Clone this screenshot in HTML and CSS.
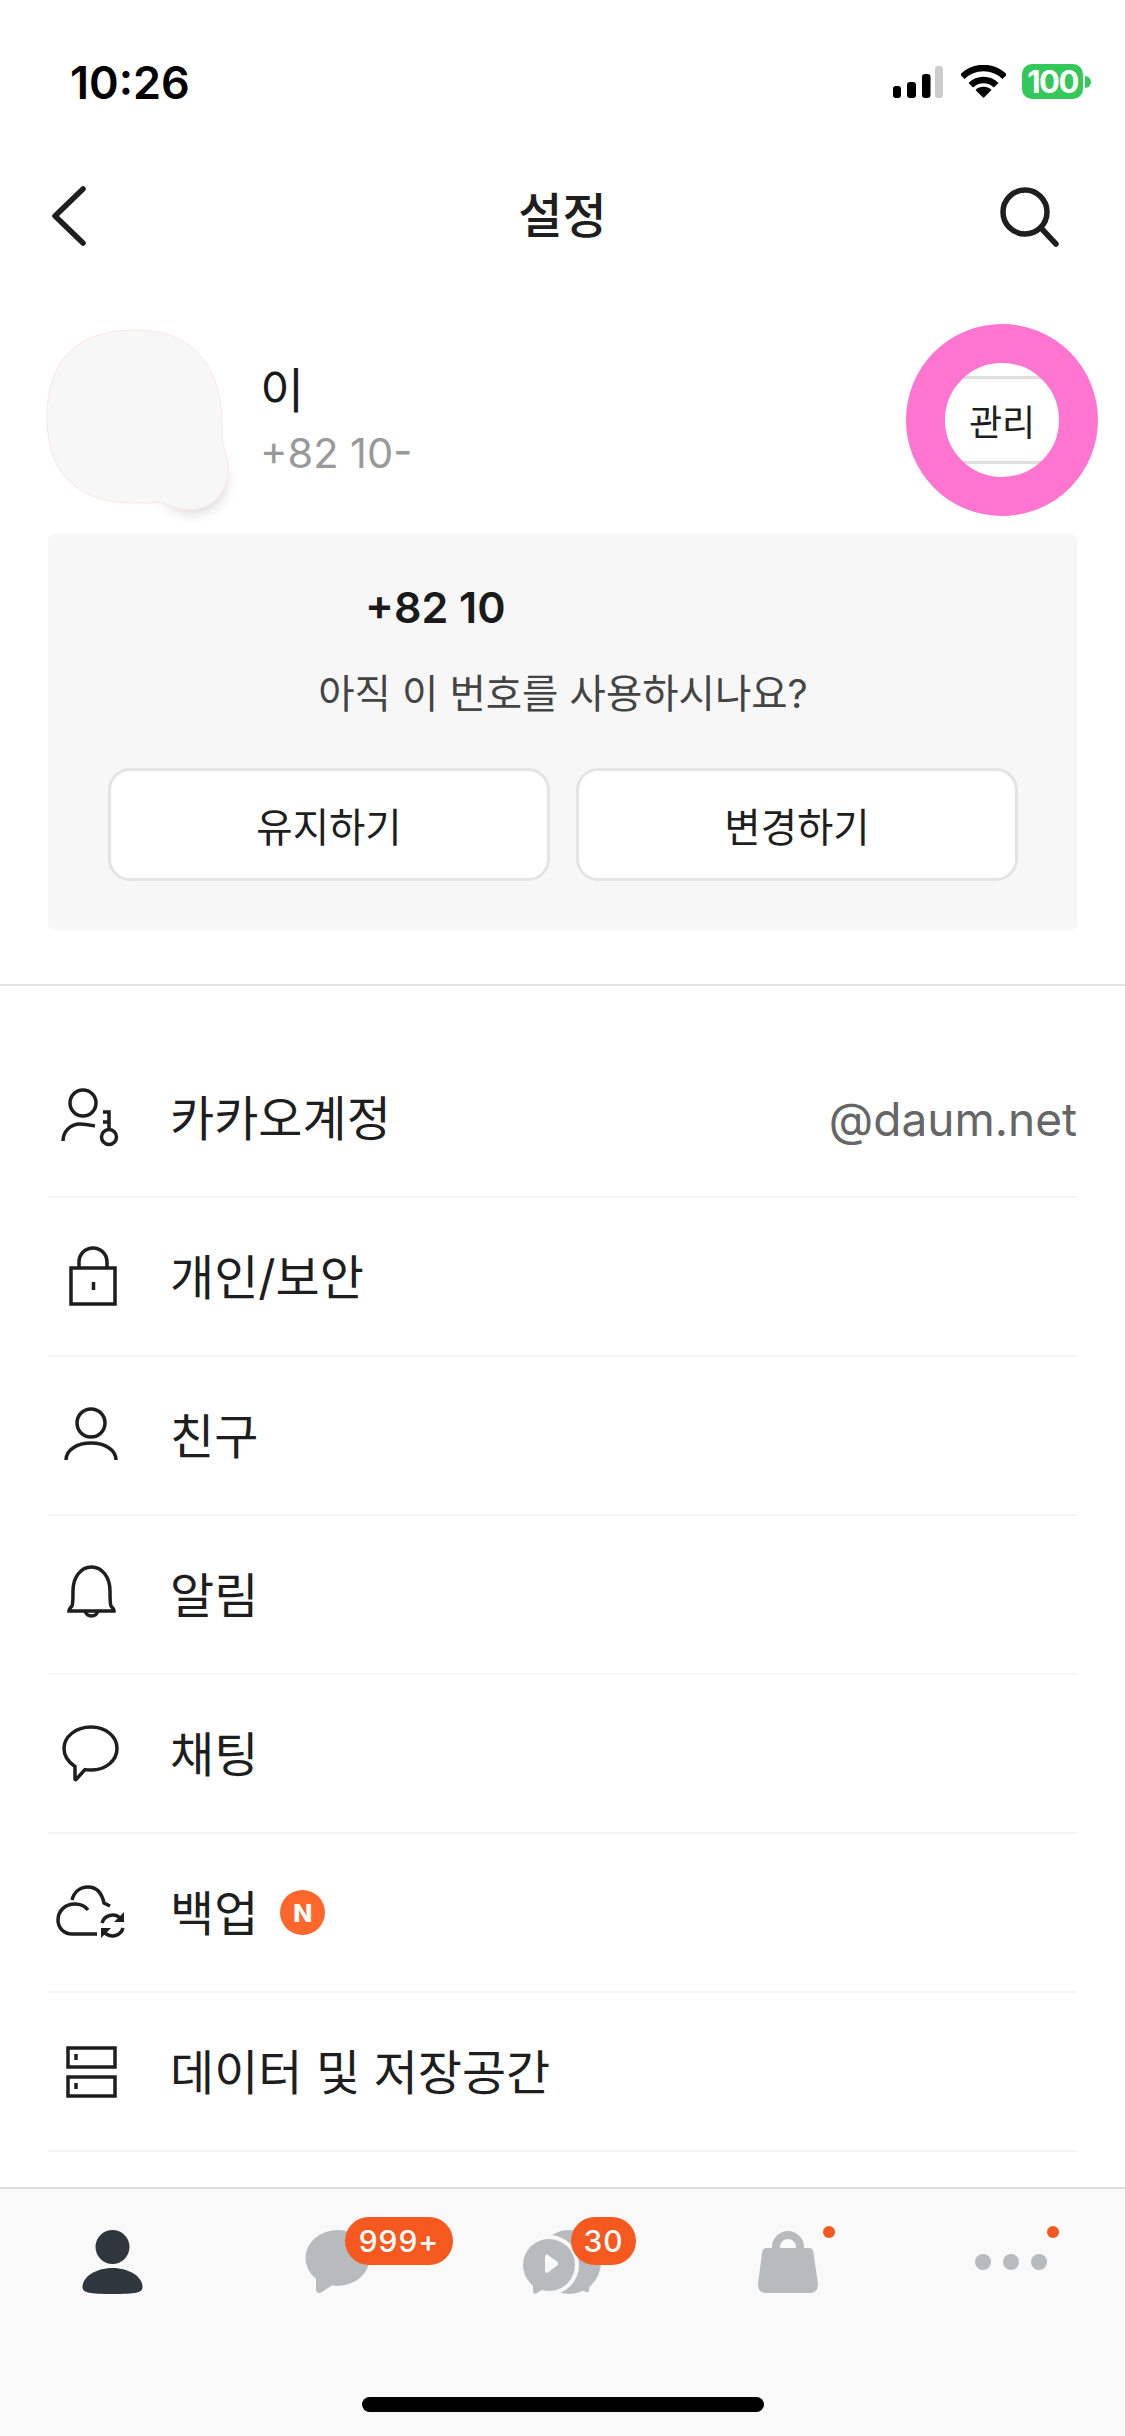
FILE: index.html
```html
<!DOCTYPE html>
<html lang="ko">
<head>
<meta charset="utf-8">
<title>설정</title>
<link rel="stylesheet" href="styles.css">
</head>
<body>
<div class="page">
  <div class="status">
    <span class="time">10:26</span>
    <div class="status-icons">
      <svg class="signal" width="50" height="32" viewBox="0 0 50 32"><rect class="k" x="0" y="20" width="8" height="12" rx="3"/><rect class="k" x="14" y="16" width="9" height="16" rx="3"/><rect class="k" x="29" y="8" width="8.500" height="24" rx="3"/><rect class="off" x="42" y="0" width="8" height="32" rx="3"/></svg>
      <svg class="wifi" width="45" height="33" viewBox="0 0 45 33"><path class="wifi-arc" d="M1.300 11.800A30 30 0 0 1 43.700 11.800"/><path class="wifi-arc" d="M9.800 20.300A18 18 0 0 1 35.200 20.300"/><path class="k" d="M22.500 33L14.500 25A11.500 11.500 0 0 1 30.500 25Z"/></svg>
      <div class="battery"><span class="battery-body">100</span><span class="battery-nub"></span></div>
    </div>
  </div>

  <header class="nav">
    <svg class="nav-back" width="44" height="72" viewBox="0 0 44 72"><path class="line5" d="M35 9L7 36L35 63"/></svg>
    <h1 class="nav-title">설정</h1>
    <svg class="nav-search" width="90" height="72" viewBox="0 0 90 72"><circle class="line5" cx="30" cy="32" r="22"/><path class="line5" d="M46 48L61 64"/></svg>
  </header>

  <section class="profile">
    <svg class="avatar" width="200" height="200" viewBox="0 0 200 200">
      <circle class="avatar-shadow" cx="150" cy="152" r="34"/>
      <path class="avatar-blob" d="M95 8C150 8 182 40 182 105L182 118C184 127 188 135 188 148C188 172 170 188 150 188C138 188 130 184 120 180C112 181 105 181 95 181C35 181 7 150 7 95C7 40 35 8 95 8Z"/>
    </svg>
    <div class="who">
      <div class="who-name">이</div>
      <div class="who-phone">+82 10-</div>
    </div>
    <div class="manage">
      <span>관리</span>
      <div class="ring"></div>
    </div>
  </section>

  <section class="card">
    <div class="card-number">+82 10</div>
    <div class="card-question">아직 이 번호를 사용하시나요?</div>
    <div class="card-actions">
      <div class="card-button">유지하기</div>
      <div class="card-button">변경하기</div>
    </div>
  </section>

  <hr class="rule">

  <main class="list">
    <div class="row">
      <svg class="row-icon" viewBox="0 0 92 72"><circle cx="35" cy="21" r="13"/><path d="M15 59C15 50 22 42 32 42C38 42 42 43 47 44"/><circle cx="61" cy="55" r="7.500"/><path d="M61 47V30H55M61 40H55"/></svg>
      <span class="row-label">카카오계정</span>
      <span class="row-value">@daum.net</span>
    </div>
    <div class="row">
      <svg class="row-icon" viewBox="0 0 92 72"><rect x="23" y="27" width="44" height="36"/><path d="M31 27V21A14 14 0 0 1 59 21V27M45.500 41V49"/></svg>
      <span class="row-label">개인/보안</span>
    </div>
    <div class="row">
      <svg class="row-icon" viewBox="0 0 92 72"><circle cx="43" cy="23" r="14"/><path d="M18 60C18 50 29 43 43 43S68 50 68 60"/></svg>
      <span class="row-label">친구</span>
    </div>
    <div class="row">
      <svg class="row-icon" viewBox="0 0 92 72"><path d="M21 52C21 50 22 49 24 47C25 45 25 41 25 32C25 18 33 8 43.500 8S62 18 62 32C62 41 62 45 63 47C65 49 66 50 66 52Z"/><path d="M37 52A7 8 0 0 0 50 52"/></svg>
      <span class="row-label">알림</span>
    </div>
    <div class="row">
      <svg class="row-icon" viewBox="0 0 92 72"><path d="M43 9C58 9 69 18.500 69 30.500S58 52 43 52C41 52 39 52 37 51.600L28 61.500C27.500 62 27 61.700 27 61V48.500C21 44.500 16 38.500 16 30.500C16 18.500 28 9 43 9Z"/></svg>
      <span class="row-label">채팅</span>
    </div>
    <div class="row">
      <svg class="row-icon" viewBox="0 0 92 72"><path d="M40 33C37 29 32 27 27 27C17 27 10 34 10 43C10 51 16 57 24 57H49"/><path d="M24 23C26 15 32 10 40 10C49 10 54 17 56 26L62 29"/><path d="M54 46A11 11 0 0 1 72 41M75 51A11 11 0 0 1 57 56"/><path class="row-fill" d="M76 35V45H66ZM53 61V51H63Z"/></svg>
      <span class="row-label">백업</span>
      <span class="new-badge">N</span>
    </div>
    <div class="row">
      <svg class="row-icon" viewBox="0 0 92 72"><rect x="20" y="12" width="47" height="19"/><rect x="20" y="41" width="47" height="19"/><path d="M28 18V24M28 47V53"/></svg>
      <span class="row-label">데이터 및 저장공간</span>
    </div>
  </main>

  <footer class="tabbar">
    <div class="tabs">
      <div class="tab">
        <svg width="90" height="80" viewBox="0 0 90 80"><ellipse class="active" cx="44.500" cy="25" rx="17" ry="17"/><path class="active" d="M44.500 46C61.500 46 74.500 55 74.500 65C74.500 71 67.500 72 44.500 72S14.500 71 14.500 65C14.500 55 27.500 46 44.500 46Z"/></svg>
      </div>
      <div class="tab">
        <svg width="90" height="80" viewBox="0 0 90 80"><ellipse class="muted" cx="44.500" cy="36" rx="32" ry="28"/><path class="muted" d="M23 50V67C23 71 26 72 29 70L41 62Z"/></svg>
        <span class="count count-wide">999+</span>
      </div>
      <div class="tab">
        <svg width="90" height="80" viewBox="0 0 90 80"><circle class="muted" cx="51" cy="40" r="32"/><path class="muted" d="M53 63L68 70C70 71 71 70 71 68L73 54Z"/><circle class="tab-bg" cx="31" cy="43" r="30"/><circle class="muted" cx="31" cy="43" r="26"/><path class="muted" d="M15 58V69C15 71.500 17 72.500 19 71L32 63Z"/><path class="tab-bg" d="M27 35C27 33 28.500 32 30 33L39 39.500C40.500 41 40.500 42.500 39 43.500L30 50.500C28.500 51.500 27 50.500 27 49Z"/></svg>
        <span class="count count-small">30</span>
      </div>
      <div class="tab">
        <svg width="90" height="80" viewBox="0 0 90 80"><path class="bag-handle" d="M33 28V25A12 12 0 0 1 57 25V28"/><path class="muted" d="M24 26H66Q70 26 70.500 31L75 62Q75 71 67 71H23Q15 71 15 62L19 31Q19.500 26 24 26Z"/></svg>
        <span class="dot dot-bag"></span>
      </div>
      <div class="tab">
        <svg width="90" height="80" viewBox="0 0 90 80"><circle class="muted" cx="15" cy="40" r="8"/><circle class="muted" cx="43" cy="40" r="8"/><circle class="muted" cx="71" cy="40" r="8"/></svg>
        <span class="dot dot-more"></span>
      </div>
    </div>
    <div class="home-indicator"></div>
  </footer>
</div>
</body>
</html>
```
FILE: styles.css
```css
* { box-sizing: border-box; }
html, body { margin: 0; padding: 0; background: #fff; }
body {
  width: 1125px;
  height: 2436px;
  overflow: hidden;
  font-family: "Inter", "Noto Sans CJK KR", "Noto Sans", sans-serif;
  color: #1e1e1e;
}
.page { width: 1125px; height: 2436px; display: flex; flex-direction: column; }

/* status bar */
.status { height: 150px; padding: 60px 34px 0 70px; display: flex; justify-content: space-between; align-items: flex-start; }
.time { font-size: 45px; font-weight: 600; line-height: 46px; color: #000; letter-spacing: 0; }
.status-icons { display: flex; align-items: center; gap: 18px; padding-top: 4px; }
.k { fill: #000; }
.off { fill: #ccc; }
.wifi-arc { fill: none; stroke: #000; stroke-width: 6.500; }
.battery { display: flex; align-items: center; gap: 2px; margin-left: -2px; }
.battery-body { width: 61px; height: 35px; border-radius: 10px; background: #34c759; color: #fff; font-size: 31px; font-weight: 700; line-height: 35px; text-align: center; letter-spacing: -1.500px; }
.battery-nub { width: 6px; height: 12px; background: #34c759; border-radius: 0 6px 6px 0; }

/* nav */
.nav { height: 132px; padding: 0 40px 0 48px; display: grid; grid-template-columns: 1fr auto 1fr; align-items: center; }
.nav-title { margin: 0; font-size: 48px; font-weight: 500; line-height: 60px; transform: translateX(-4px); }
.nav-search { justify-self: end; }
.line5 { fill: none; stroke: #1e1e1e; stroke-width: 5.500; stroke-linecap: round; stroke-linejoin: round; }

/* profile */
.profile { height: 252px; padding: 40px 48px 0 40px; display: flex; align-items: flex-start; }
.avatar { flex: none; }
.avatar-blob { fill: #f7f7f7; stroke: #fbe6e4; stroke-width: 1; }
.avatar-shadow { fill: #f7f7f7; filter: drop-shadow(3px 6px 6px rgba(0, 0, 0, .14)); }
.who { margin-left: 20px; flex: 1; }
.who-name { font-size: 48px; line-height: 60px; color: #1a1a1a; margin-top: 39px; }
.who-phone { font-size: 41.500px; line-height: 56px; color: #999; margin-top: 4px; }
.manage { position: relative; width: 150px; height: 88px; margin-top: 54px; border-top: 3px solid #ddd; border-bottom: 3px solid #ddd; display: flex; align-items: center; justify-content: center; font-size: 36px; color: #1e1e1e; }
.ring { position: absolute; left: -21px; top: -55px; width: 192px; height: 192px; border: 39px solid #ff75d0; border-radius: 50%; }

/* card */
.card { margin: 0 48px; height: 396px; padding: 43px 59px 0 60px; background: #f7f7f7; border-radius: 6px; }
.card-number { font-size: 43px; font-weight: 600; line-height: 60px; padding-left: 257px; color: #1a1a1a; }
.card-question { font-size: 39.500px; line-height: 60px; margin-top: 27px; text-align: center; color: #444; }
.card-actions { display: flex; gap: 26px; margin-top: 44px; }
.card-button { flex: 1; height: 113px; background: #fff; border: 3px solid #e4e4e4; border-radius: 22px; display: flex; align-items: center; justify-content: center; font-size: 39.500px; color: #1e1e1e; }

.rule { margin: 54px 0 0; border: 0; height: 2px; background: #e2e2e2; }

/* list */
.list { flex: 1; padding: 53px 48px 0; }
.row { height: 159px; display: flex; align-items: center; border-bottom: 2px solid #f5f5f5; }
.row-icon { width: 92px; height: 72px; flex: none; margin-right: 30px; fill: none; stroke: #1e1e1e; stroke-width: 3.500; }
.row-icon .row-fill { fill: #1e1e1e; stroke: none; }
.row-label { font-size: 48px; line-height: 60px; padding-top: 3px; color: #1e1e1e; }
.row-value { margin-left: auto; font-size: 46px; padding-top: 2px; color: #666; }
.new-badge { width: 45px; height: 45px; margin-left: 22px; border-radius: 50%; background: #ff662b; color: #fff; font-size: 25px; font-weight: 800; display: flex; align-items: center; justify-content: center; }

/* tab bar */
.tabbar { height: 249px; background: #f9f9f9; border-top: 2px solid #dcdcdc; display: flex; flex-direction: column; align-items: center; }
.tabs { width: 100%; height: 113px; padding-top: 33px; display: flex; }
.tab { position: relative; flex: 1; display: flex; justify-content: center; align-items: flex-start; }
.active { fill: #2f363e; }
.muted { fill: #b8bbbe; }
.tab-bg { fill: #f9f9f9; }
.bag-handle { fill: none; stroke: #b8bbbe; stroke-width: 8; }
.count { position: absolute; top: -5px; height: 48px; border-radius: 24px; background: #f6591f; color: #fff; font-size: 30px; font-weight: 500; line-height: 48px; text-align: center; letter-spacing: 1px; }
.count-wide { left: 120px; width: 108px; }
.count-small { left: 121px; width: 65px; }
.dot { position: absolute; top: 4px; width: 12px; height: 12px; border-radius: 50%; background: #f6591f; }
.dot-bag { left: 148px; }
.dot-more { left: 147px; }
.home-indicator { width: 402px; height: 15px; margin-top: 95px; background: #000; border-radius: 8px; }
```
